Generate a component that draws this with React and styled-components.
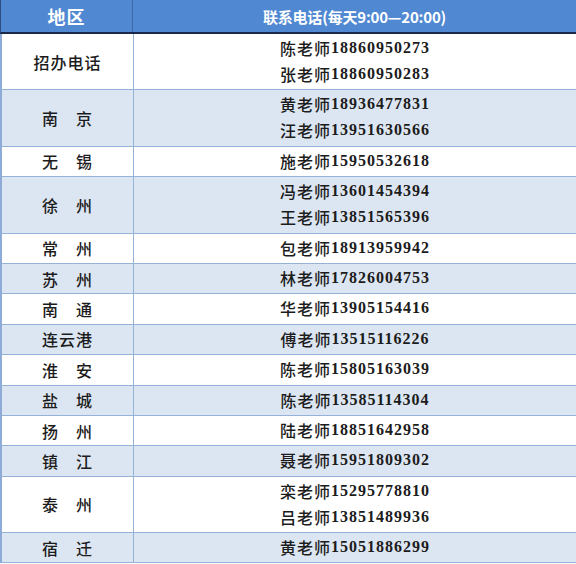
import React from "react";
import styled, { createGlobalStyle } from "styled-components";

const GlobalStyle = createGlobalStyle`
  html, body { margin: 0; padding: 0; background: #ffffff; }
  body { font-family: "Liberation Serif", "Noto Sans CJK SC", serif; }
`;

const Page = styled.div`
  width: 576px;
  height: 564px;
  overflow: hidden;
  background: #ffffff;
`;

const HeaderRow = styled.div`
  display: grid;
  grid-template-columns: 132px 1fr;
  height: 32px;
  background: #5088d2;
  border-left: 1px solid #2d4f86;
  border-bottom: 2px solid #1b2848;
  color: #ffffff;
  font-family: "Noto Sans CJK SC", sans-serif;
  font-weight: 700;
`;

const HeaderCell = styled.div`
  display: flex;
  align-items: center;
  justify-content: center;
  font-size: ${(p) => (p.$small ? "15px" : "18px")};
  letter-spacing: ${(p) => (p.$small ? "-0.2px" : "1px")};
  border-right: ${(p) => (p.$first ? "1px solid #3c68a8" : "none")};
`;

const Row = styled.div`
  display: grid;
  grid-template-columns: 132px 1fr;
  background: ${(p) => (p.$shaded ? "#dce6f2" : "#ffffff")};
  border-left: 2px solid #8eaad6;
  border-bottom: 1px solid #95b3d7;
  color: #1c1c1c;
`;

const RegionCell = styled.div`
  display: flex;
  align-items: center;
  justify-content: center;
  border-right: 1px solid #95b3d7;
  font-family: "Noto Sans CJK SC", sans-serif;
  font-size: 16px;
  font-weight: 500;
  letter-spacing: 1px;
  line-height: 20px;
  white-space: pre;
`;

const ContactCell = styled.div`
  display: flex;
  flex-direction: column;
  align-items: center;
  padding: 1px 0 2.4px;
`;

const Contact = styled.div`
  display: flex;
  align-items: center;
  height: 26px;
  font-size: 16px;
  line-height: 20px;
  letter-spacing: 1px;
  white-space: nowrap;
`;

const Name = styled.span`
  font-family: "Noto Sans CJK SC", sans-serif;
  font-weight: 500;
`;

const Phone = styled.span`
  font-family: "Liberation Serif", serif;
  font-weight: 700;
`;

const rows = [
  ["招办电话", [["陈老师", "18860950273"], ["张老师", "18860950283"]]],
  ["南　京", [["黄老师", "18936477831"], ["汪老师", "13951630566"]]],
  ["无　锡", [["施老师", "15950532618"]]],
  ["徐　州", [["冯老师", "13601454394"], ["王老师", "13851565396"]]],
  ["常　州", [["包老师", "18913959942"]]],
  ["苏　州", [["林老师", "17826004753"]]],
  ["南　通", [["华老师", "13905154416"]]],
  ["连云港", [["傅老师", "13515116226"]]],
  ["淮　安", [["陈老师", "15805163039"]]],
  ["盐　城", [["陈老师", "13585114304"]]],
  ["扬　州", [["陆老师", "18851642958"]]],
  ["镇　江", [["聂老师", "15951809302"]]],
  ["泰　州", [["栾老师", "15295778810"], ["吕老师", "13851489936"]]],
  ["宿　迁", [["黄老师", "15051886299"]]],
];

export default function App() {
  return (
    <Page>
      <GlobalStyle />
      <HeaderRow>
        <HeaderCell $first>地区</HeaderCell>
        <HeaderCell $small>联系电话(每天9:00—20:00)</HeaderCell>
      </HeaderRow>
      {rows.map(([region, contacts], i) => (
        <Row key={region} $shaded={i % 2 === 1}>
          <RegionCell>{region}</RegionCell>
          <ContactCell>
            {contacts.map(([name, phone]) => (
              <Contact key={phone}>
                <Name>{name}</Name>
                <Phone>{phone}</Phone>
              </Contact>
            ))}
          </ContactCell>
        </Row>
      ))}
    </Page>
  );
}
